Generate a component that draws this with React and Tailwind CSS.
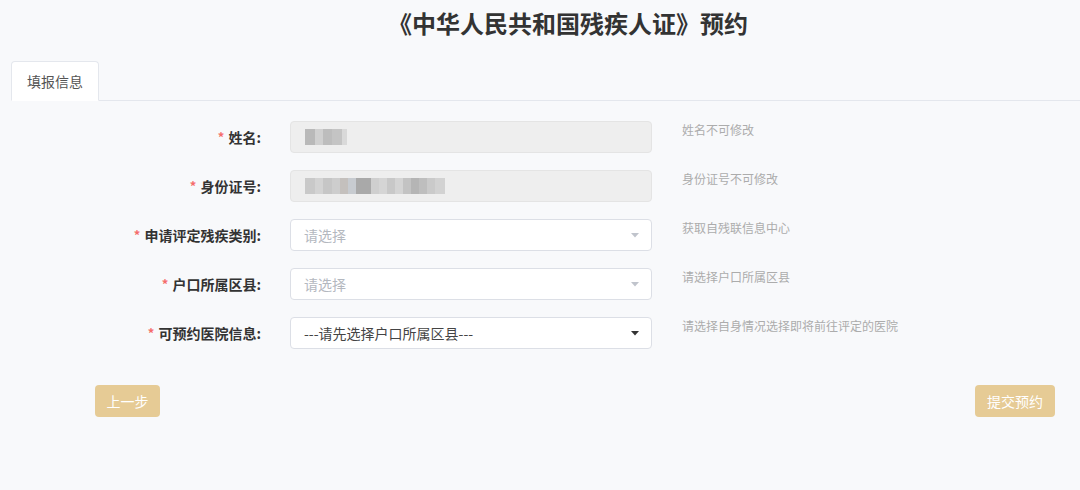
import React from "react";

const font = { fontFamily: '"Noto Sans CJK SC", "Noto Sans", sans-serif' };

function Caret({ dark }) {
  return (
    <svg width="8" height="5" viewBox="0 0 8 5" className="shrink-0">
      <path d="M0 0 L8 0 L4 4.5 Z" fill={dark ? "#333333" : "#c0c4cc"} />
    </svg>
  );
}

function Label({ children }) {
  return (
    <div className="flex h-[32px] items-center justify-end text-[14px] font-bold text-[#333]">
      <span className="mr-[4px] text-[13px] text-[#f56c6c]">*</span>
      {children}:
    </div>
  );
}

function Hint({ children }) {
  return <div className="pt-[1px] text-[12px] leading-[16px] text-[#acacac]">{children}</div>;
}

function Blur({ widths }) {
  return (
    <div className="flex h-[16px] items-stretch blur-[0.6px]">
      {widths.map((w, i) => (
        <span key={i} className="block" style={{ width: w[0], backgroundColor: w[1] }} />
      ))}
    </div>
  );
}

function DisabledInput({ children }) {
  return (
    <div className="flex h-[32px] items-center rounded-[4px] border border-[#e4e4e4] bg-[#eeeeee] pl-[14px]">
      {children}
    </div>
  );
}

function Select({ text, placeholder, dark }) {
  return (
    <div className="flex h-[32px] items-center justify-between rounded-[4px] border border-[#dcdfe6] bg-white pl-[13px] pr-[12px]">
      <span className={`text-[14px] ${placeholder ? "text-[#b4b8bf]" : "text-[#444]"}`}>{text}</span>
      <Caret dark={dark} />
    </div>
  );
}

export default function App() {
  return (
    <div className="min-h-[490px] w-full bg-[#f8f9fb]" style={font}>
      <div className="flex h-[61px] items-start justify-center pl-[56px] pt-[5px]">
        <h1 className="text-[24px] font-bold leading-[36px] text-[#333]">《中华人民共和国残疾人证》预约</h1>
      </div>
      <div className="ml-[11px] flex border-b border-[#e4e7ed]">
        <div className="-mb-px flex h-[40px] items-center rounded-t-[4px] border border-b-white border-[#e4e7ed] bg-white px-[15px] text-[14px] text-[#555]">
          填报信息
        </div>
      </div>
      <div className="mt-[20px] grid grid-cols-[261px_362px_1fr] gap-x-[29px] gap-y-[17px]">
        <Label>姓名</Label>
        <DisabledInput>
          <Blur
            widths={[
              [10, "#b9b9b9"],
              [8, "#d0d0d0"],
              [9, "#bdbdbd"],
              [10, "#c4c4c4"],
              [5, "#d9d9d9"],
            ]}
          />
        </DisabledInput>
        <div className="pl-[1px]">
          <Hint>姓名不可修改</Hint>
        </div>

        <Label>身份证号</Label>
        <DisabledInput>
          <Blur
            widths={[
              [10, "#c9c9c9"],
              [8, "#d3d3d3"],
              [9, "#c6c6c6"],
              [8, "#cdcdcd"],
              [8, "#c4c0bd"],
              [8, "#c7cbd0"],
              [15, "#a9a9a9"],
              [8, "#cfcfcf"],
              [8, "#d5d5d5"],
              [8, "#c8c8c8"],
              [8, "#d4d4d4"],
              [8, "#c3c3c3"],
              [8, "#b5b5b5"],
              [8, "#bebebe"],
              [8, "#cacaca"],
              [10, "#d2d2d2"],
            ]}
          />
        </DisabledInput>
        <div className="pl-[1px]">
          <Hint>身份证号不可修改</Hint>
        </div>

        <Label>申请评定残疾类别</Label>
        <Select text="请选择" placeholder />
        <div className="pl-[1px]">
          <Hint>获取自残联信息中心</Hint>
        </div>

        <Label>户口所属区县</Label>
        <Select text="请选择" placeholder />
        <div className="pl-[1px]">
          <Hint>请选择户口所属区县</Hint>
        </div>

        <Label>可预约医院信息</Label>
        <Select text="---请先选择户口所属区县---" dark />
        <div className="pl-[1px]">
          <Hint>请选择自身情况选择即将前往评定的医院</Hint>
        </div>
      </div>
      <div className="mt-[36px] flex items-center justify-between pl-[95px] pr-[25px]">
        <button className="h-[32px] w-[65px] rounded-[4px] bg-[#e6cb95] text-[14px] text-white">上一步</button>
        <button className="h-[32px] w-[80px] rounded-[4px] bg-[#e6cb95] text-[14px] text-white">提交预约</button>
      </div>
    </div>
  );
}
